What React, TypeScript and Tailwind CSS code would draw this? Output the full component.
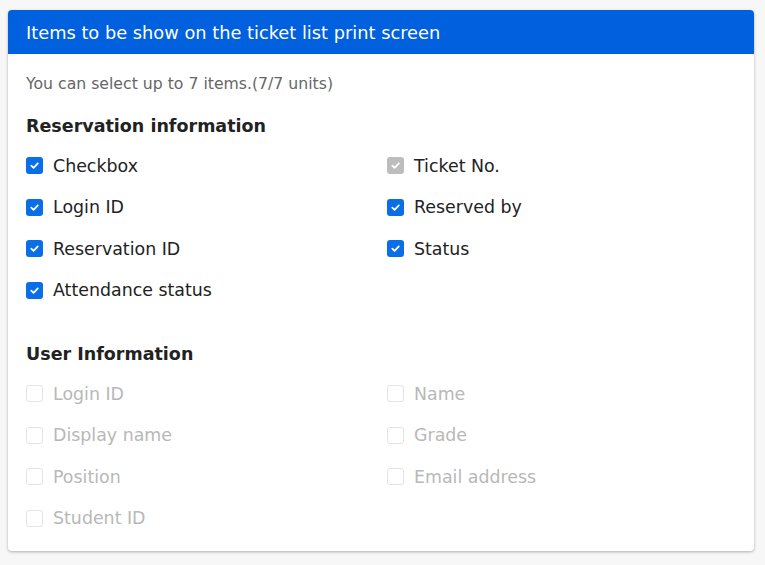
import React from 'react'

type Item = { label: string; checked: boolean; disabled?: boolean }

const reservation: Item[][] = [
  [{ label: 'Checkbox', checked: true }, { label: 'Ticket No.', checked: true, disabled: true }],
  [{ label: 'Login ID', checked: true }, { label: 'Reserved by', checked: true }],
  [{ label: 'Reservation ID', checked: true }, { label: 'Status', checked: true }],
  [{ label: 'Attendance status', checked: true }],
]

const userInfo: Item[][] = [
  [{ label: 'Login ID', checked: false, disabled: true }, { label: 'Name', checked: false, disabled: true }],
  [{ label: 'Display name', checked: false, disabled: true }, { label: 'Grade', checked: false, disabled: true }],
  [{ label: 'Position', checked: false, disabled: true }, { label: 'Email address', checked: false, disabled: true }],
  [{ label: 'Student ID', checked: false, disabled: true }],
]

function Box({ item }: { item: Item }) {
  if (!item.checked) {
    return <span className="h-[17px] w-[17px] shrink-0 rounded-[3px] border border-[#e3e3e3] bg-white" />
  }
  return (
    <span
      className={`flex h-[17px] w-[17px] shrink-0 items-center justify-center rounded-[3px] ${
        item.disabled ? 'bg-[#bdbdbd]' : 'bg-[#0a6fe6]'
      }`}
    >
      <svg viewBox="0 0 12 12" className="h-[11px] w-[11px]" fill="none">
        <path d="M2.5 6.2 L5 8.6 L9.6 3.6" stroke="white" strokeWidth="1.9" strokeLinecap="round" strokeLinejoin="round" />
      </svg>
    </span>
  )
}

function CheckRow({ item }: { item: Item }) {
  const text = item.checked ? 'text-[#222]' : 'text-[#b8b8b8]'
  return (
    <label className="flex items-center gap-[10px]">
      <Box item={item} />
      <span className={`text-[17.4px] ${text}`}>{item.label}</span>
    </label>
  )
}

function Section({ title, rows }: { title: string; rows: Item[][] }) {
  return (
    <div>
      <h3 className="text-[17.5px] font-bold leading-[24px] text-[#222]">{title}</h3>
      <div className="mt-[7px] flex flex-col">
        {rows.map((row, i) => (
          <div key={i} className="grid h-[41.5px] grid-cols-[361px_1fr] items-center">
            {row.map((item) => (
              <CheckRow key={item.label} item={item} />
            ))}
          </div>
        ))}
      </div>
    </div>
  )
}

export default function App() {
  return (
    <div className="min-h-[565px] bg-[#f7f7f7] px-[8px] pt-[10px]" style={{ fontFamily: '"DejaVu Sans", Verdana, sans-serif' }}>
      <div className="w-[746px] overflow-hidden rounded-[4px] bg-white shadow-[0_1px_3px_rgba(0,0,0,0.3)]">
        <div className="flex h-[44px] items-center bg-[#0060dd] px-[18px] pt-[2px] text-[17.8px] text-white">
          Items to be show on the ticket list print screen
        </div>
        <div className="px-[18px] pb-[12px] pt-[20px]">
          <p className="text-[15.7px] leading-[20px] text-[#666]">You can select up to 7 items.(7/7 units)</p>
          <div className="mt-[20px]">
            <Section title="Reservation information" rows={reservation} />
          </div>
          <div className="mt-[31px]">
            <Section title="User Information" rows={userInfo} />
          </div>
        </div>
      </div>
    </div>
  )
}
